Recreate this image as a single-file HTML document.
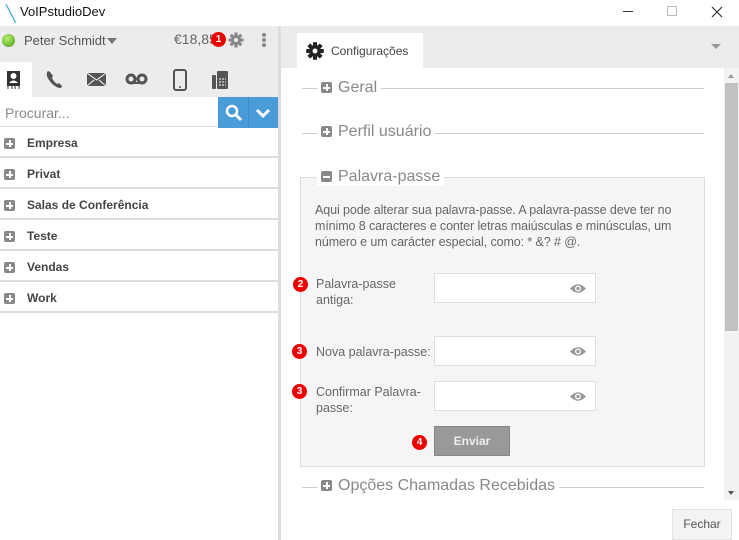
<!DOCTYPE html>
<html><head><meta charset="utf-8"><style>
*{margin:0;padding:0;box-sizing:border-box}
body{width:739px;height:540px;overflow:hidden;background:#fff;font-family:"Liberation Sans",sans-serif;position:relative;color:#555}
.a{position:absolute}
.badge{position:absolute;width:15px;height:15px;border-radius:50%;background:#e00;color:#fff;font-size:10px;font-weight:bold;text-align:center;line-height:15px}
.plus{position:absolute;width:11px;height:11px;background:#888;border-radius:2px}
.plus:before{content:"";position:absolute;left:2px;top:4.5px;width:7px;height:2px;background:#fff}
.plus:after{content:"";position:absolute;left:4.5px;top:2px;width:2px;height:7px;background:#fff}
.minus:after{display:none}
.row{position:absolute;left:0;width:278px;height:31px;border-bottom:2px solid #ddd}
.row span{position:absolute;left:27px;top:9px;font-size:12px;font-weight:bold;color:#444}
.row .plus{left:4px;top:11px}
.leg{position:absolute;left:302px;width:402px;height:1px;background:#ccc}
.legt{position:absolute;background:#fff;padding:0 4px 0 4px;font-size:16px;color:#888}
.lbl{position:absolute;font-size:12.5px;color:#666;line-height:16px}
.inp{position:absolute;left:434px;width:162px;height:30px;background:#fff;border:1px solid #ddd}
.eye{position:absolute;right:9px;top:9px}
</style></head><body>
<!-- title bar -->
<div class="a" style="left:6px;top:4px;font-size:16px;color:#3ab0e0">╲</div>
<div class="a" style="left:20px;top:4px;font-size:13px;color:#111">VoIPstudioDev</div>
<svg class="a" style="left:600px;top:0" width="139" height="26"><path d="M23 11.5h10" stroke="#333"/><rect x="67.5" y="6.5" width="9" height="9" fill="none" stroke="#bbb"/><path d="M112 7l10 10M122 7l-10 10" stroke="#333" stroke-width="1.2"/></svg>

<!-- left panel -->
<div class="a" style="left:0;top:26px;width:279px;height:71px;background:#ececec"></div>
<div class="a" style="left:2px;top:34px;width:13px;height:13px;border-radius:50%;background:radial-gradient(circle at 40% 35%,#b6f070,#4a9a10)"></div>
<div class="a" style="left:24px;top:33px;font-size:13px;color:#555">Peter Schmidt</div>
<div class="a" style="left:107px;top:38px;border:5px solid transparent;border-top:6px solid #777"></div>
<div class="a" style="left:174px;top:31px;font-size:14px;color:#666">€18,85</div>
<div class="badge" style="left:211px;top:32px">1</div>
<svg class="a" style="left:228px;top:32px" width="16" height="16" viewBox="-8 -8 16 16"><g fill="#888"><circle r="5"/><g id="t"><rect x="-1.6" y="-7.5" width="3.2" height="15"/></g><use href="#t" transform="rotate(45)"/><use href="#t" transform="rotate(90)"/><use href="#t" transform="rotate(135)"/></g><circle r="2" fill="#ececec"/></svg>
<div class="a" style="left:262px;top:33px;width:4px;height:4px;background:#888;border-radius:50%;box-shadow:0 5px 0 #888,0 10px 0 #888"></div>
<div class="a" style="left:0;top:62px;width:32px;height:35px;background:#fff"></div>
<svg class="a" style="left:0;top:62px" width="239" height="35">
<rect x="7" y="9" width="13" height="15" fill="#333"/><circle cx="13.5" cy="14" r="3" fill="#fff"/><path d="M9 21q4.5-5 9 0z" fill="#fff"/><path d="M8 24v3M12 24v3M15 24v3M19 24v3" stroke="#333"/>
<path d="M48 9q-3 3 1 9t10 8q3 0 3-2l-3-3-2 1q-3-2-5-6l1-2-3-4z" fill="#555"/>
<rect x="87" y="11" width="19" height="13" fill="#555"/><path d="M87 11l9.5 7 9.5-7M87 24l7-6M106 24l-7-6" stroke="#fff" fill="none"/>
<circle cx="131" cy="17" r="4" fill="none" stroke="#555" stroke-width="3"/><circle cx="142" cy="17" r="4" fill="none" stroke="#555" stroke-width="3"/><path d="M131 21h11" stroke="#555" stroke-width="2"/>
<rect x="174" y="8" width="12" height="20" rx="2" fill="none" stroke="#555" stroke-width="2"/><circle cx="180" cy="25" r="1" fill="#555"/>
<rect x="212" y="13" width="4" height="14" rx="1" fill="#555"/><rect x="217" y="9" width="11" height="18" rx="1" fill="#555"/><path d="M219 17h7M219 20h7M219 23h7" stroke="#fff" stroke-dasharray="2 1"/>
</svg>
<div class="a" style="left:0;top:97px;width:218px;height:30px;border-bottom:1px solid #ddd"></div>
<div class="a" style="left:5px;top:105px;font-size:14px;color:#888">Procurar...</div>
<div class="a" style="left:218px;top:97px;width:61px;height:31px;background:#4a9cd8"></div>
<div class="a" style="left:248px;top:97px;width:1px;height:31px;background:#3d88c0"></div>
<svg class="a" style="left:218px;top:97px" width="61" height="31"><circle cx="14" cy="14" r="5" fill="none" stroke="#fff" stroke-width="2.5"/><path d="M18 18l5 5" stroke="#fff" stroke-width="3"/><path d="M39 13l6 6 6-6" stroke="#fff" stroke-width="3" fill="none"/></svg>
<div class="row" style="top:127px"><i class="plus"></i><span>Empresa</span></div>
<div class="row" style="top:158px"><i class="plus"></i><span>Privat</span></div>
<div class="row" style="top:189px"><i class="plus"></i><span>Salas de Conferência</span></div>
<div class="row" style="top:220px"><i class="plus"></i><span>Teste</span></div>
<div class="row" style="top:251px"><i class="plus"></i><span>Vendas</span></div>
<div class="row" style="top:282px"><i class="plus"></i><span>Work</span></div>
<div class="a" style="left:278px;top:26px;width:3px;height:514px;background:#ddd"></div>

<!-- right panel -->
<div class="a" style="left:281px;top:26px;width:458px;height:42px;background:#ececec"></div>
<div class="a" style="left:297px;top:33px;width:126px;height:35px;background:#fff"></div>
<svg class="a" style="left:306px;top:42px" width="18" height="18" viewBox="-8 -8 16 16"><g fill="#222"><circle r="5.2"/><g id="t2"><rect x="-1.8" y="-7.8" width="3.6" height="15.6"/></g><use href="#t2" transform="rotate(45)"/><use href="#t2" transform="rotate(90)"/><use href="#t2" transform="rotate(135)"/></g><circle r="2.2" fill="#fff"/></svg>
<div class="a" style="left:331px;top:44px;font-size:12px;color:#444">Configurações</div>
<div class="a" style="left:711px;top:44px;border:5px solid transparent;border-top:5px solid #999"></div>
<div class="a" style="left:724px;top:68px;width:15px;height:432px;background:#f2f2f2"></div>
<div class="a" style="left:725px;top:83px;width:13px;height:248px;background:#c1c1c1"></div>
<div class="a" style="left:728px;top:74px;border:3.5px solid transparent;border-bottom:4px solid #999;border-top:0"></div>
<div class="a" style="left:728px;top:491px;border:3.5px solid transparent;border-top:4px solid #555;border-bottom:0"></div>

<div class="leg" style="top:88px"></div><div class="legt" style="left:317px;top:79px"><i class="plus" style="left:4px;top:3px"></i><span style="margin-left:17px">Geral</span></div>
<div class="leg" style="top:133px"></div><div class="legt" style="left:317px;top:123px"><i class="plus" style="left:4px;top:3px"></i><span style="margin-left:17px">Perfil usuário</span></div>

<div class="a" style="left:300px;top:177px;width:405px;height:290px;background:#f5f5f5;border:1px solid #ddd"></div>
<div class="legt" style="left:317px;top:168px;background:#fff"><i class="plus minus" style="left:4px;top:3px"></i><span style="margin-left:17px">Palavra-passe</span></div>
<div class="lbl" style="left:315px;top:202px;width:390px;letter-spacing:-.1px">Aqui pode alterar sua palavra-passe. A palavra-passe deve ter no mínimo 8 caracteres e conter letras maiúsculas e minúsculas, um número e um carácter especial, como: * &amp;? # @.</div>

<div class="badge" style="left:293px;top:277px">2</div>
<div class="lbl" style="left:316px;top:276px">Palavra-passe<br>antiga:</div>
<div class="inp" style="top:273px"><svg class="eye" width="16" height="11"><path d="M0 5.5Q8-3 16 5.5 8 14 0 5.5z" fill="#999"/><circle cx="8" cy="5.5" r="3" fill="#fff"/><circle cx="8" cy="5.5" r="1.7" fill="#999"/></svg></div>
<div class="badge" style="left:292px;top:344px">3</div>
<div class="lbl" style="left:316px;top:344px">Nova palavra-passe:</div>
<div class="inp" style="top:336px"><svg class="eye" width="16" height="11"><path d="M0 5.5Q8-3 16 5.5 8 14 0 5.5z" fill="#999"/><circle cx="8" cy="5.5" r="3" fill="#fff"/><circle cx="8" cy="5.5" r="1.7" fill="#999"/></svg></div>
<div class="badge" style="left:292px;top:384px">3</div>
<div class="lbl" style="left:316px;top:384px">Confirmar Palavra-<br>passe:</div>
<div class="inp" style="top:381px"><svg class="eye" width="16" height="11"><path d="M0 5.5Q8-3 16 5.5 8 14 0 5.5z" fill="#999"/><circle cx="8" cy="5.5" r="3" fill="#fff"/><circle cx="8" cy="5.5" r="1.7" fill="#999"/></svg></div>
<div class="badge" style="left:412px;top:435px">4</div>
<div class="a" style="left:434px;top:426px;width:76px;height:30px;background:#999;border:1px solid #888;color:#eee;font-size:12px;font-weight:bold;text-align:center;line-height:28px">Enviar</div>

<div class="leg" style="top:487px;width:402px"></div><div class="legt" style="left:317px;top:477px"><i class="plus" style="left:4px;top:3px"></i><span style="margin-left:17px">Opções Chamadas Recebidas</span></div>
<div class="a" style="left:281px;top:500px;width:458px;height:40px;background:#fff"></div>
<div class="a" style="left:672px;top:509px;width:60px;height:31px;background:#f3f3f3;border:1px solid #e3e3e3;font-size:12px;color:#555;text-align:center;line-height:29px">Fechar</div>
</body></html>
